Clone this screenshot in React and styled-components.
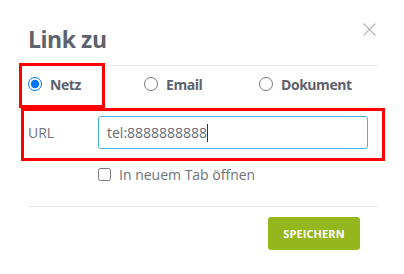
import React from "react";
import styled, { createGlobalStyle } from "styled-components";

const Global = createGlobalStyle`
  html, body { margin: 0; padding: 0; background: #fff; }
  body { font-family: "Open Sans", "Liberation Sans", sans-serif; }
  * { box-sizing: border-box; }
`;

const Dialog = styled.div`
  width: 404px;
  height: 274px;
  background: #fff;
  padding: 23px 26px 0 28px;
`;

const Header = styled.div`
  display: flex;
  justify-content: space-between;
  align-items: flex-start;
  padding-bottom: 10px;
  border-bottom: 1px solid #e6e6e6;
`;

const Title = styled.h2`
  margin: 0;
  font-size: 23px;
  line-height: 32px;
  font-weight: 700;
  color: #5d626c;
  letter-spacing: -0.45px;
`;

const Close = styled.button`
  margin: 0 2px 0 0;
  padding: 0;
  border: 0;
  background: none;
  width: 13px;
  height: 13px;
  display: flex;
  cursor: pointer;
`;

const RadioRow = styled.div`
  display: grid;
  grid-template-columns: 116px 115px auto;
  padding-top: 8px;
  margin-bottom: 22px;
`;

const Option = styled.label`
  position: relative;
  display: flex;
  align-items: center;
  gap: 8px;
  height: 20px;
  font-size: 14px;
  font-weight: 700;
  color: #5d626c;
  letter-spacing: -0.45px;

  ${(p) =>
    p.$marked &&
    `
    &::after {
      content: "";
      position: absolute;
      top: -11px;
      left: -9px;
      width: 80px;
      height: 39px;
      border: 3px solid #f00;
      pointer-events: none;
    }
  `}
`;

const Radio = styled.input`
  margin: 0;
  width: 14px;
  height: 14px;
`;

const UrlRow = styled.div`
  position: relative;
  display: grid;
  grid-template-columns: 70px 270px;
  align-items: center;

  &::after {
    content: "";
    position: absolute;
    top: -8px;
    left: -7px;
    right: -7px;
    bottom: -12px;
    border: 3px solid #f00;
    pointer-events: none;
  }
`;

const Label = styled.span`
  font-size: 14px;
  color: #6f7379;
`;

const Input = styled.input`
  height: 33px;
  width: 270px;
  border: 1px solid #45b4e3;
  border-radius: 3px;
  padding: 0 8px;
  font-family: "Open Sans", sans-serif;
  font-size: 14px;
  color: #666a70;
  outline: none;
`;

const Cursor = styled.span`
  position: absolute;
  top: 8px;
  width: 1px;
  height: 18px;
  background: #333;
`;

const InputWrap = styled.div`
  position: relative;
  width: 270px;
`;

const CheckRow = styled.label`
  display: flex;
  align-items: center;
  gap: 8px;
  margin: 15px 0 0 70px;
  height: 20px;
  font-size: 14px;
  color: #6f7379;
`;

const Check = styled.input`
  margin: 0;
  width: 13px;
  height: 13px;
`;

const Footer = styled.div`
  margin-top: 22px;
  border-top: 1px solid #e6e6e6;
  padding-top: 10px;
  display: flex;
  justify-content: flex-end;
  padding-right: 18px;
`;

const SaveButton = styled.button`
  width: 92px;
  height: 33px;
  border: 0;
  border-radius: 3px;
  background: #96b61d;
  color: #fff;
  font-family: "Open Sans", sans-serif;
  font-weight: 700;
  font-size: 11px;
  letter-spacing: 0.1px;
  padding: 0;
`;

export default function App() {
  return (
    <>
      <Global />
      <Dialog>
        <Header>
          <Title>Link zu</Title>
          <Close aria-label="close">
            <svg width="13" height="13" viewBox="0 0 13 13">
              <path d="M0.5 0.5 L12.5 12.5 M12.5 0.5 L0.5 12.5" stroke="#b5b5b5" strokeWidth="1.1" />
            </svg>
          </Close>
        </Header>
        <RadioRow>
          <Option $marked>
            <Radio type="radio" name="t" defaultChecked />
            Netz
          </Option>
          <Option>
            <Radio type="radio" name="t" />
            Email
          </Option>
          <Option>
            <Radio type="radio" name="t" />
            Dokument
          </Option>
        </RadioRow>
        <UrlRow>
          <Label>URL</Label>
          <InputWrap>
            <Input defaultValue="tel:8888888888" />
            <Cursor style={{ left: "109px" }} />
          </InputWrap>
        </UrlRow>
        <CheckRow>
          <Check type="checkbox" />
          In neuem Tab öffnen
        </CheckRow>
        <Footer>
          <SaveButton>SPEICHERN</SaveButton>
        </Footer>
      </Dialog>
    </>
  );
}
